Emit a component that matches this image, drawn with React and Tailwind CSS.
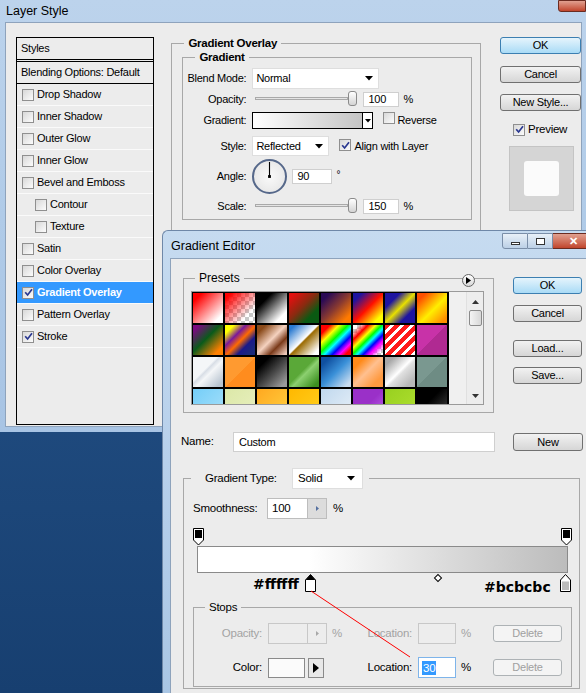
import React from 'react';

const swatches = [
  'linear-gradient(135deg,#ff0000 15%,#ffffff 85%)',
  'linear-gradient(135deg,rgba(255,0,0,1) 10%,rgba(255,0,0,0) 75%),repeating-conic-gradient(#c8c8c8 0 25%,#fff 0 50%) 0 0/8px 8px',
  'linear-gradient(135deg,#000 25%,#fff 80%)',
  'linear-gradient(135deg,#e21010 10%,#8a2a10 45%,#0a5a12 75%)',
  'linear-gradient(135deg,#2a0a55 15%,#8a3a30 50%,#ff7a00 85%)',
  'linear-gradient(135deg,#1e14a0 15%,#ff1000 50%,#ffff00 85%)',
  'linear-gradient(135deg,#1e14a0 25%,#e8e000 50%,#1e14a0 75%)',
  'linear-gradient(135deg,#ff5000 15%,#ffee00 55%,#ff9000 90%)',
  'linear-gradient(135deg,#7a0a80 10%,#0a5a1a 45%,#ff8000 85%)',
  'linear-gradient(135deg,#ffff00 15%,#7a1a9a 35%,#ff6a00 52%,#1a1a8a 70%,#1a2a7a 90%)',
  'linear-gradient(135deg,#8a4a1a 15%,#f5d2c0 48%,#7a3a1a 70%,#ecc8b8 95%)',
  'linear-gradient(135deg,#2a7ad0 10%,#ffffff 48%,#9a6a00 52%,#ffffff 90%)',
  'linear-gradient(135deg,#ff0000 15%,#ffff00 30%,#00ff00 45%,#00ffff 55%,#0000ff 68%,#ff00ff 80%,#ff0000 90%)',
  'linear-gradient(135deg,rgba(255,0,0,0) 10%,#ff0000 25%,#ffff00 38%,#00ff00 48%,#00ffff 56%,#0000ff 66%,#ff00ff 76%,rgba(255,0,255,0) 92%),repeating-conic-gradient(#c8c8c8 0 25%,#fff 0 50%) 0 0/8px 8px',
  'repeating-linear-gradient(135deg,#ff1a1a 0 4px,#ffffff 4px 7px)',
  'linear-gradient(135deg,#c832a8 50%,#b02a92 50%)',
  'linear-gradient(135deg,#f4f6f8 40%,#d8dee6 45%,#f4f6f8 55%,#b8c4d0 90%)',
  'linear-gradient(135deg,#ff9a30 50%,#ff8c1e 50%)',
  'linear-gradient(135deg,#000 20%,#4a4a4a 55%,#9a9a9a 90%)',
  'linear-gradient(135deg,#5aa838 45%,#8cd070 55%,#3c9020 90%)',
  'linear-gradient(135deg,#1050a0 15%,#3a90d8 50%,#c8dcf0 90%)',
  'linear-gradient(135deg,#ff8a1a 20%,#ffc090 48%,#ff9a40 80%)',
  'linear-gradient(135deg,#a8a8a8 15%,#ffffff 48%,#e0e0e0 55%,#b8b8b8 85%)',
  'linear-gradient(135deg,#7a9890 50%,#6e8c84 50%)',
  'linear-gradient(135deg,#74cef8,#a8e0fa)',
  'linear-gradient(135deg,#dce8a8,#e8f0c0)',
  'linear-gradient(135deg,#ffa820,#ffd040)',
  'linear-gradient(135deg,#ffb800,#ffd020)',
  'linear-gradient(135deg,#c0d8ee,#e8f0f8)',
  'linear-gradient(135deg,#9a30c8 50%,#b050e0 80%)',
  'linear-gradient(135deg,#98d020,#b0e030)',
  'linear-gradient(135deg,#000 40%,#333 80%)',
];

const styleItems = [
  { label: 'Drop Shadow' },
  { label: 'Inner Shadow' },
  { label: 'Outer Glow' },
  { label: 'Inner Glow' },
  { label: 'Bevel and Emboss' },
  { label: 'Contour', sub: true },
  { label: 'Texture', sub: true },
  { label: 'Satin' },
  { label: 'Color Overlay' },
  { label: 'Gradient Overlay', checked: true, selected: true },
  { label: 'Pattern Overlay' },
  { label: 'Stroke', checked: true },
];

const Check = ({ checked }) => (
  <span className="inline-flex items-center justify-center w-[12px] h-[12px] shrink-0 border border-[#8f8f8f] bg-linear-to-br from-[#d8d8d8] to-[#fcfcfc]">
    {checked && (
      <svg width="9" height="9" viewBox="0 0 9 9">
        <path d="M1.2 4.2 L3.6 7 L8 1.2" stroke="#2a3890" strokeWidth="1.7" fill="none" />
      </svg>
    )}
  </span>
);

const Btn = ({ children, className = '', primary, disabled }) => (
  <div
    className={`flex items-center justify-center rounded-[3px] border text-[11px] ${
      primary
        ? 'border-[#3c7fb1] bg-linear-to-b from-[#e5f4fc] to-[#a9dbf6] text-black'
        : disabled
        ? 'border-[#adb2b5] bg-[#f4f4f4] text-[#a0a0a0]'
        : 'border-[#707070] bg-linear-to-b from-[#f2f2f2] to-[#d6d6d6] text-black'
    } ${className}`}
  >
    {children}
  </div>
);

const Arrow = () => (
  <svg width="8" height="5" viewBox="0 0 8 5">
    <path d="M0 0 H8 L4 4.5 Z" fill="#000" />
  </svg>
);

const Slider = () => (
  <div className="relative w-[104px] h-[16px]">
    <div className="absolute left-[3px] right-[8px] top-[6px] h-[3px] border border-[#a9a9a9] bg-[#e4e4e4]" />
    <div className="absolute left-[96px] top-0 w-[9px] h-[15px] rounded-[3px] border border-[#8a8a8a] bg-linear-to-b from-[#ffffff] to-[#d4d4d4]" />
  </div>
);

const Input = ({ children, className = '' }) => (
  <div className={`flex items-center pl-[4px] bg-white border border-[#cfcfcf] text-[11px] ${className}`}>{children}</div>
);

export default function App() {
  return (
    <div className="relative w-[586px] h-[693px] overflow-hidden bg-linear-to-b from-[#2a5a92] to-[#173f70] font-['Liberation_Sans',Arial,sans-serif] text-[11px] tracking-[-0.25px] text-black">
      {/* Layer Style window */}
      <div className="absolute left-0 top-0 w-[586px] h-[432px] bg-linear-to-b from-[#bcd3ec] via-[#b0cbe8] to-[#a8c4e4]">
        <div className="h-[22px] pl-[6px] pt-[2px] text-[12.5px] tracking-normal text-black">Layer Style</div>
        <div className="absolute right-0 top-0 w-[28px] h-[12px] rounded-bl-[3px] border border-[#6b2b20] bg-linear-to-b from-[#e0a090] to-[#c0442c]" />
        <div className="ml-[5px] mr-[4px] h-[405px] bg-[#ececec] border border-[#8ea3bc] flex items-start">
          {/* Styles list */}
          <div className="ml-[10px] mt-[14px] w-[139px] h-[388px] border border-black bg-[#ececec]">
            <div className="h-[22px] flex items-center pl-[4px] border-b border-black">Styles</div>
            <div className="h-[23px] mt-[1px] flex items-center pl-[4px] border-t border-b border-black">Blending Options: Default</div>
            {styleItems.map((it) => (
              <div
                key={it.label}
                className={`h-[22px] flex items-center border-b border-[#fafafa] ${it.sub ? 'pl-[18px]' : 'pl-[5px]'} ${
                  it.selected ? 'bg-[#3399ff] text-white font-bold' : ''
                }`}
              >
                <Check checked={it.checked} />
                <span className="ml-[3px]">{it.label}</span>
              </div>
            ))}
          </div>

          {/* Gradient Overlay panel */}
          <fieldset className="ml-[17px] mt-[13px] w-[311px] h-[300px] border border-[#a8a8a8]">
            <legend className="ml-[12px] px-[4px] leading-[14px] font-bold text-[11.5px]">Gradient Overlay</legend>
            <fieldset className="ml-[10px] w-[290px] border border-[#a8a8a8] pb-[5px]">
              <legend className="ml-[12px] px-[4px] leading-[14px] font-bold text-[11.5px]">Gradient</legend>
              <div className="mt-[4px] h-[21px] flex items-center">
                <span className="w-[63px] text-right">Blend Mode:</span>
                <div className="ml-[6px] w-[127px] h-[21px] bg-white border border-[#dedede] flex items-center justify-between pl-[3px] pr-[5px]">
                  <span>Normal</span>
                  <Arrow />
                </div>
              </div>
              <div className="mt-[2px] h-[16px] flex items-center">
                <span className="w-[63px] text-right">Opacity:</span>
                <div className="ml-[6px]"><Slider /></div>
                <Input className="ml-[7px] w-[36px] h-[15px]">100</Input>
                <span className="ml-[4px]">%</span>
              </div>
              <div className="mt-[5px] h-[17px] flex items-center">
                <span className="w-[63px] text-right">Gradient:</span>
                <div className="ml-[6px] h-[17px] flex border border-black">
                  <div className="w-[109px] h-full bg-linear-to-r from-[#ffffff] to-[#c4c4c4]" />
                  <div className="w-[10px] h-full border-l border-black bg-white flex items-center justify-center">
                    <svg width="6" height="4" viewBox="0 0 6 4"><path d="M0 0 H6 L3 3.5 Z" fill="#000" /></svg>
                  </div>
                </div>
                <span className="ml-[10px]"><Check /></span>
                <span className="ml-[2px]">Reverse</span>
              </div>
              <div className="mt-[7px] h-[20px] flex items-center">
                <span className="w-[63px] text-right">Style:</span>
                <div className="ml-[6px] w-[77px] h-[20px] bg-white border border-[#dedede] flex items-center justify-between pl-[3px] pr-[5px]">
                  <span>Reflected</span>
                  <Arrow />
                </div>
                <span className="ml-[10px]"><Check checked /></span>
                <span className="ml-[3px]">Align with Layer</span>
              </div>
              <div className="mt-[2px] h-[37px] flex items-center">
                <span className="w-[63px] text-right">Angle:</span>
                <div className="ml-[6px] w-[35px] h-[35px] rounded-full border-2 border-[#56688a] bg-radial from-[#fafafa] to-[#e2e2e2] flex items-center justify-center">
                  <svg width="33" height="33" viewBox="0 0 33 33">
                    <line x1="16.5" y1="16.5" x2="16.5" y2="1" stroke="#000" strokeWidth="1.2" />
                    <rect x="15" y="15" width="3" height="3" fill="#000" />
                  </svg>
                </div>
                <Input className="ml-[5px] w-[40px] h-[15px]">90</Input>
                <span className="ml-[4px] self-start mt-[9px] text-[10px]">°</span>
              </div>
              <div className="mt-[3px] h-[16px] flex items-center">
                <span className="w-[63px] text-right">Scale:</span>
                <div className="ml-[6px]"><Slider /></div>
                <Input className="ml-[7px] w-[36px] h-[15px]">150</Input>
                <span className="ml-[4px]">%</span>
              </div>
            </fieldset>
          </fieldset>

          {/* Right column */}
          <div className="ml-[19px] mt-[14px] flex flex-col">
            <Btn primary className="w-[81px] h-[17px]">OK</Btn>
            <Btn className="mt-[12px] w-[81px] h-[17px]">Cancel</Btn>
            <Btn className="mt-[11px] w-[81px] h-[17px]">New Style...</Btn>
            <div className="mt-[10px] pl-[13px] flex items-center">
              <Check checked />
              <span className="ml-[3px] text-[11.5px]">Preview</span>
            </div>
            <div className="mt-[8px] ml-[9px] w-[65px] h-[65px] bg-[#d5d5d5] border border-[#c4c4c4] flex items-center justify-center">
              <div className="w-[35px] h-[35px] rounded-[3px] bg-[#fbfbfb]" />
            </div>
          </div>
        </div>
      </div>

      {/* Gradient Editor window */}
      <div className="absolute left-[162px] top-[230px] right-0 bottom-0 rounded-tl-[6px] border-l border-t border-[#6f88a8] bg-linear-to-b from-[#c6dbf0] via-[#b7d0eb] to-[#a9c6e5]">
        <div className="h-[27px] pl-[8px] pt-[6px] text-[12.5px] tracking-normal">Gradient Editor</div>
        <div className="absolute left-[339px] top-[2px] flex h-[16px]">
          <div className="w-[26px] h-full rounded-bl-[3px] border border-[#7a8ea8] bg-linear-to-b from-[#e8f0f8] to-[#bcd0e6] flex items-center justify-center">
            <div className="w-[9px] h-[3px] border border-[#333] bg-white mt-[5px]" />
          </div>
          <div className="w-[25px] h-full border-y border-r border-[#7a8ea8] bg-linear-to-b from-[#e8f0f8] to-[#bcd0e6] flex items-center justify-center">
            <div className="w-[9px] h-[7px] border border-[#333] bg-white" />
          </div>
          <div className="w-[40px] h-full border-y border-[#6b2b20] bg-linear-to-b from-[#e0a090] to-[#c0442c] flex items-center justify-center">
            <span className="text-white font-bold text-[11px] leading-none">✕</span>
          </div>
        </div>
        <div className="ml-[7px] h-full bg-[#ececec] border-l border-t border-[#8ea3bc]">
          <div className="flex items-start">
            {/* Presets */}
            <fieldset className="relative ml-[12px] mt-[12px] w-[311px] border border-[#a8a8a8] pb-[7px]">
              <legend className="ml-[11px] px-[4px] leading-[14px] text-[12px] tracking-normal">Presets</legend>
              <div className="absolute right-[18px] top-[-11px] w-[13px] h-[13px] rounded-full border border-[#666] bg-linear-to-b from-[#ffffff] to-[#d8d8d8] flex items-center justify-center">
                <svg width="5" height="7" viewBox="0 0 5 7"><path d="M0 0 L5 3.5 L0 7 Z" fill="#000" /></svg>
              </div>
              <div className="mt-[6px] ml-[7px] w-[293px] h-[114px] border border-[#9a9a9a] bg-[#f0f0f0] flex overflow-hidden">
                <div className="w-[258px] h-full overflow-hidden">
                  <div className="grid grid-cols-[repeat(8,30px)] gap-[2px] bg-black p-[1px] w-[257px]">
                    {swatches.map((bg, i) => (
                      <div key={i} className="w-[30px] h-[30px]" style={{ background: bg }} />
                    ))}
                  </div>
                </div>
                <div className="ml-auto w-[17px] h-full bg-[#ededed] border-l border-[#e0e0e0] flex flex-col items-center">
                  <svg className="mt-[8px]" width="7" height="4" viewBox="0 0 7 4"><path d="M0 4 L3.5 0 L7 4 Z" fill="#333" /></svg>
                  <div className="mt-[6px] w-[13px] h-[16px] rounded-[2px] border border-[#8a8a8a] bg-linear-to-r from-[#f4f4f4] to-[#d8d8d8]" />
                  <svg className="mt-auto mb-[6px]" width="7" height="4" viewBox="0 0 7 4"><path d="M0 0 H7 L3.5 4 Z" fill="#333" /></svg>
                </div>
              </div>
            </fieldset>
            <div className="ml-[19px] mt-[18px] flex flex-col">
              <Btn primary className="w-[69px] h-[17px] text-[11.5px]">OK</Btn>
              <Btn className="mt-[11px] w-[69px] h-[17px] text-[11.5px]">Cancel</Btn>
              <Btn className="mt-[18px] w-[69px] h-[17px] text-[11.5px]">Load...</Btn>
              <Btn className="mt-[10px] w-[69px] h-[17px] text-[11.5px]">Save...</Btn>
            </div>
          </div>

          {/* Name */}
          <div className="mt-[19px] h-[20px] flex items-center">
            <span className="ml-[10px] w-[52px] text-[11.5px]">Name:</span>
            <Input className="w-[262px] h-[20px] text-[11.5px] pl-[5px]">Custom</Input>
            <Btn className="ml-[18px] w-[70px] h-[18px] text-[11.5px]">New</Btn>
          </div>

          {/* Gradient Type */}
          <fieldset className="ml-[12px] mt-[16px] w-[397px] border border-[#a8a8a8] pb-[1px] text-[11.5px]">
            <legend className="ml-[7px] pl-[14px] pr-[6px] flex items-center h-[21px]">
              <span className="w-[87px]">Gradient Type:</span>
              <div className="w-[71px] h-[21px] bg-white border border-[#dedede] flex items-center justify-between pl-[5px] pr-[7px]">
                <span>Solid</span>
                <Arrow />
              </div>
            </legend>
            <div className="mt-[9px] pl-[9px] h-[21px] flex items-center">
              <span className="w-[74px]">Smoothness:</span>
              <div className="w-[60px] h-[21px] flex bg-white border border-[#bdbdbd]">
                <span className="w-[40px] pl-[4px] flex items-center">100</span>
                <div className="w-[19px] h-full border-l border-[#bdbdbd] bg-[#dcdcdc] flex items-center justify-center">
                  <svg width="3" height="5" viewBox="0 0 3 5"><path d="M0 0 L3 2.5 L0 5 Z" fill="#5570a0" /></svg>
                </div>
              </div>
              <span className="ml-[6px]">%</span>
            </div>

            {/* gradient bar with stops */}
            <div className="relative mt-[9px] h-[64px]">
              <svg className="absolute left-[9px] top-0" width="11" height="18" viewBox="0 0 11 18">
                <path d="M0.5 0.5 H10.5 V12 L5.5 17 L0.5 12 Z" fill="#fff" stroke="#000" />
                <rect x="2" y="2" width="7" height="8" fill="#000" />
              </svg>
              <svg className="absolute left-[377px] top-0" width="11" height="18" viewBox="0 0 11 18">
                <path d="M0.5 0.5 H10.5 V12 L5.5 17 L0.5 12 Z" fill="#fff" stroke="#000" />
                <rect x="2" y="2" width="7" height="8" fill="#000" />
              </svg>
              <div className="absolute left-[13px] top-[18px] w-[371px] h-[27px] border border-[#8a8a8a] bg-linear-to-r from-[#ffffff] from-30% to-[#bcbcbc]" />
              <div className="absolute left-[251px] top-[47px] w-[6px] h-[6px] rotate-45 border border-black bg-white" />
              <span className="absolute left-[69px] top-[47px] font-['DejaVu_Sans',sans-serif] font-bold text-[14px] leading-[18px] tracking-normal">#ffffff</span>
              <span className="absolute left-[300px] top-[50px] font-['DejaVu_Sans',sans-serif] font-bold text-[14px] leading-[18px] tracking-normal">#bcbcbc</span>
              <svg className="absolute left-[121px] top-[46px]" width="11" height="18" viewBox="0 0 11 18">
                <path d="M5.5 0.5 L10.5 6 V17.5 H0.5 V6 Z" fill="#fff" stroke="#000" />
                <path d="M5.5 0.5 L10.5 6 H0.5 Z" fill="#000" />
              </svg>
              <svg className="absolute left-[376px] top-[46px]" width="11" height="18" viewBox="0 0 11 18">
                <path d="M5.5 0.5 L10.5 6 V17.5 H0.5 V6 Z" fill="#fff" stroke="#000" />
                <rect x="2" y="7.5" width="7" height="8.5" fill="#bcbcbc" />
              </svg>
            </div>

            {/* Stops */}
            <fieldset className="ml-[9px] mt-[8px] w-[379px] border border-[#a8a8a8] pb-[8px]">
              <legend className="ml-[11px] px-[4px] leading-[14px]">Stops</legend>
              <div className="mt-[9px] h-[21px] flex items-center text-[#a3a3a3]">
                <span className="w-[68px] text-right">Opacity:</span>
                <div className="ml-[6px] w-[59px] h-[21px] flex border border-[#c8c8c8] bg-[#ededed]">
                  <span className="w-[39px]" />
                  <div className="w-[19px] h-full border-l border-[#c8c8c8] flex items-center justify-center">
                    <svg width="3" height="5" viewBox="0 0 3 5"><path d="M0 0 L3 2.5 L0 5 Z" fill="#a8a8a8" /></svg>
                  </div>
                </div>
                <span className="w-[36px] pl-[5px]">%</span>
                <span className="w-[49px] text-right">Location:</span>
                <div className="ml-[6px] w-[38px] h-[21px] border border-[#c8c8c8] bg-[#ededed]" />
                <span className="w-[37px] pl-[5px]">%</span>
                <Btn disabled className="w-[69px] h-[17px]">Delete</Btn>
              </div>
              <div className="mt-[13px] h-[21px] flex items-center">
                <span className="w-[68px] text-right">Color:</span>
                <div className="ml-[6px] w-[37px] h-[20px] border border-[#8a8a8a] bg-[#fbfbfb]" />
                <div className="ml-[3px] w-[16px] h-[20px] border border-[#8a8a8a] bg-[#e8e8e8] flex items-center justify-center">
                  <svg width="6" height="10" viewBox="0 0 6 10"><path d="M0 0 L6 5 L0 10 Z" fill="#000" /></svg>
                </div>
                <span className="w-[39px]" />
                <span className="w-[49px] text-right">Location:</span>
                <div className="ml-[6px] w-[38px] h-[21px] border border-[#7eb4ea] bg-white flex items-center pl-[3px]">
                  <span className="bg-[#3399ff] text-white px-[1px] leading-[14px]">30</span>
                </div>
                <span className="w-[37px] pl-[5px]">%</span>
                <Btn disabled className="w-[69px] h-[17px]">Delete</Btn>
              </div>
            </fieldset>
          </fieldset>
        </div>
      </div>

      {/* annotation line */}
      <svg className="absolute left-0 top-0 pointer-events-none" width="586" height="693">
        <line x1="311" y1="591" x2="410" y2="657" stroke="#ff0000" strokeWidth="1" />
      </svg>
    </div>
  );
}
